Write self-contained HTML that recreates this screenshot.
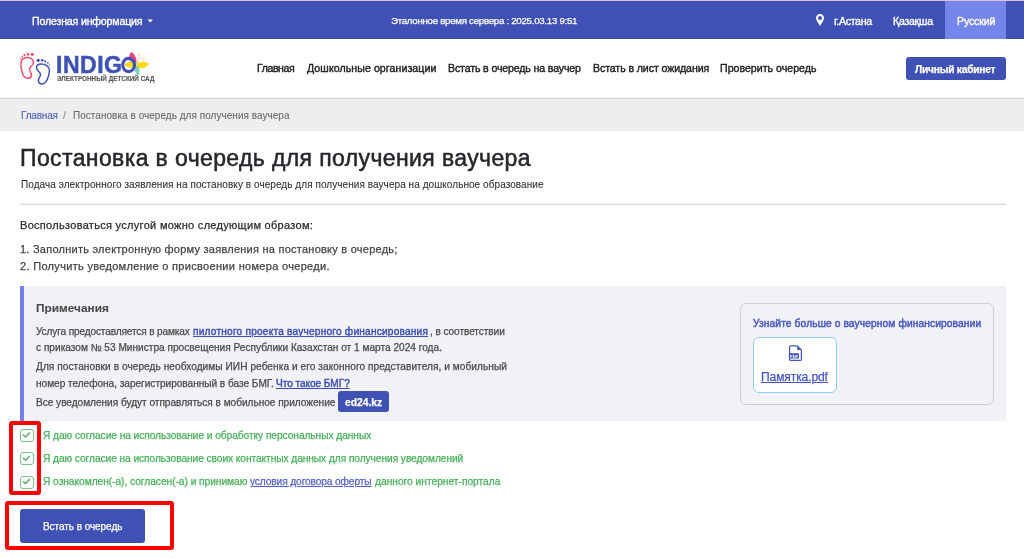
<!DOCTYPE html>
<html><head><meta charset="utf-8">
<style>
*{margin:0;padding:0;box-sizing:border-box}
html,body{width:1024px;height:558px;overflow:hidden;background:#fff;font-family:"Liberation Sans",sans-serif;color:#333}
.a{position:absolute}
.t{position:absolute;white-space:nowrap;line-height:1;-webkit-text-stroke:0.25px currentColor;will-change:transform}
a{color:#3f51b5}
#topstrip{left:0;top:0;width:1024px;height:1px;background:#d8c5cf}
#topbar{left:0;top:1px;width:1024px;height:38px;background:#3f51b5}
#ru{left:945.2px;top:1px;width:60.6px;height:38px;background:#7486e9}
#hdrline{left:0;top:97px;width:1024px;height:2px;background:#d3d3d3;border-top:1px solid #f6f6f6}
#bc{left:0;top:99px;width:1024px;height:32px;background:#eeeeee}
#hr{left:20px;top:203px;width:986px;height:2px;background:#dcdcdc;border-top:1px solid #f0f0f0}
#notes{left:20px;top:286px;width:986px;height:135px;background:#f1f2f6;border-left:4px solid #7282ea}
#card{left:740px;top:303px;width:254px;height:102px;border:1px solid #cfcfd4;border-radius:6px}
#file{left:753px;top:337px;width:84px;height:56px;border:1px solid #8fd0f2;border-radius:6px;background:#fff}
.cb{position:absolute;left:20px;width:14px;height:13px;border:1px solid #7fbf8a;border-radius:3px;background:#fff}
.red{position:absolute;border:4px solid #ff0000;border-radius:3px}
#btn{left:20px;top:509px;width:125px;height:34px;background:#3f51b5;border-radius:3px}
#lk{left:906px;top:57px;width:100px;height:23px;background:#3f51b5;border-radius:3px}
#badge{left:337.5px;top:391px;width:51.5px;height:21px;background:#3f51b5;border-radius:3px}
</style></head><body>
<div class="a" id="topstrip"></div>
<div class="a" id="topbar"></div>
<div class="a" id="ru"></div>
<div class="t" style="left:31.7px;top:16px;font-size:10.6px;letter-spacing:-0.167px;color:#fff;-webkit-text-stroke:0.35px currentColor">Полезная информация</div>
<svg class="a" style="left:147px;top:19px" width="7" height="4" viewBox="0 0 7 4"><path d="M0.5 0.5 L6 0.5 L3.25 3.5Z" fill="#fff"/></svg>
<div class="t" style="left:390.7px;top:16px;font-size:9.7px;letter-spacing:-0.275px;color:#fff">Эталонное время сервера : 2025.03.13 9:51</div>
<svg class="a" style="left:815px;top:13px" width="10" height="14" viewBox="0 0 10 14"><path d="M5 1 C2.6 1 1 2.8 1 5 C1 7.5 3.6 10.5 5 13 C6.4 10.5 9 7.5 9 5 C9 2.8 7.4 1 5 1Z M5 3 A2 2 0 1 1 5 7 A2 2 0 1 1 5 3Z" fill="#fff" fill-rule="evenodd"/></svg>
<div class="t" style="left:833.8px;top:16px;font-size:10.6px;letter-spacing:-0.3px;color:#fff;-webkit-text-stroke:0.35px currentColor">г.Астана</div>
<div class="t" style="left:892.8px;top:16px;font-size:10.6px;letter-spacing:-0.283px;color:#fff;-webkit-text-stroke:0.35px currentColor">Қазақша</div>
<div class="t" style="left:956.6px;top:16px;font-size:10.6px;letter-spacing:-0.15px;color:#fff;-webkit-text-stroke:0.35px currentColor">Русский</div>

<svg class="a" style="left:0;top:0" width="160" height="90" viewBox="0 0 160 90">
<g fill="#ee4d6e"><circle cx="32.2" cy="54.3" r="1.6"/><circle cx="28" cy="54.2" r="1.3"/><circle cx="24.5" cy="55.1" r="1.05"/><circle cx="22.2" cy="56.7" r="0.85"/><circle cx="20.8" cy="58.7" r="0.7"/></g>
<path d="M27 57.6 C31 57.6 33.8 59.6 33.4 63 C33 66 29.2 66.6 29.4 69.2 C29.6 71.4 31.8 72.6 31.4 75.6 C31 78 29 78.3 27.2 78.2 C23.2 78 21 71 20.9 64.3 C20.8 60 23.2 57.6 27 57.6 Z" fill="none" stroke="#ee4d6e" stroke-width="1.5"/>
<g fill="#3f51b5"><circle cx="38.2" cy="60.3" r="1.6"/><circle cx="42.2" cy="60.3" r="1.3"/><circle cx="45.3" cy="61.4" r="1.05"/><circle cx="47.9" cy="62.8" r="0.85"/><circle cx="49.5" cy="64.9" r="0.7"/></g>
<path d="M41.2 64 C37.8 64 36.2 65.6 36.5 68.2 C36.8 71 40.6 72.2 40.6 74.6 C40.6 76.6 38.2 78 38.4 80.6 C38.6 83 40.2 84 42 84 C46 84 49.4 77 49.4 70.2 C49.4 66.2 45.4 64 41.2 64 Z" fill="none" stroke="#3f51b5" stroke-width="1.5"/>
<path d="M131.3 52 C128 56 128.8 60 131 61.5 C133 63 135 63 136.4 62.6 C136.8 57.5 134.5 54 131.3 52 Z" fill="#f0407a"/>
<path d="M137 64.5 C133 60.5 127 61 124.6 65 C128 69 133 68.6 137 64.5 Z" fill="#ffd81a"/>
<path d="M136.4 64.6 C140 60.6 146 61 148.9 64 C146 68 141 70.2 136.4 66.4 Z" fill="#ffd81a"/>
<path d="M136 65.5 C133.4 68.5 134.4 73 138.5 75.3 C140.6 72 140.6 67.4 136 65.5 Z" fill="#7dd3bf"/>
<g fill="none" stroke="#f6cba6" stroke-width="0.8"><path d="M137.2 60.5 C137.5 58 139.5 57 139.6 55 C139.7 53.5 138 53 137.6 54.3 C137.3 55.3 138.6 55.6 138.8 54.8"/><path d="M137.8 61 C139.5 58.5 142 57.5 143.8 58.2 C145.3 58.8 145 60.8 143.6 60.6 C142.6 60.4 142.8 59.4 143.4 59.4"/></g>
<circle cx="137.2" cy="62.5" r="1" fill="#f39a58"/>
<ellipse cx="128.6" cy="65" rx="5.9" ry="6.6" fill="none" stroke="#3f51b5" stroke-width="3.1"/>
</svg>
<div class="t" style="left:55.9px;top:54px;font-size:23px;letter-spacing:0.525px;color:#3f51b5;font-weight:700;-webkit-text-stroke:0.5px #3f51b5">INDIG</div>
<div class="t" style="left:57.1px;top:76px;font-size:6.3px;letter-spacing:0.036px;color:#5a5a5a;font-weight:700;-webkit-text-stroke:0.15px #5a5a5a">ЭЛЕКТРОННЫЙ ДЕТСКИЙ САД</div>
<div class="t" style="left:257.0px;top:63px;font-size:10.6px;letter-spacing:-0.433px;color:#222;-webkit-text-stroke:0.4px currentColor">Главная</div>
<div class="t" style="left:306.6px;top:63px;font-size:10.6px;letter-spacing:0.071px;color:#222;-webkit-text-stroke:0.4px currentColor">Дошкольные организации</div>
<div class="t" style="left:447.8px;top:63px;font-size:10.6px;letter-spacing:-0.14px;color:#222;-webkit-text-stroke:0.4px currentColor">Встать в очередь на ваучер</div>
<div class="t" style="left:592.5px;top:63px;font-size:10.6px;letter-spacing:-0.095px;color:#222;-webkit-text-stroke:0.4px currentColor">Встать в лист ожидания</div>
<div class="t" style="left:719.6px;top:63px;font-size:10.6px;letter-spacing:0.013px;color:#222;-webkit-text-stroke:0.4px currentColor">Проверить очередь</div>
<div class="a" id="lk"></div>
<div class="t" style="left:914.9px;top:65px;font-size:10.2px;letter-spacing:-0.208px;color:#fff;font-weight:700">Личный кабинет</div>
<div class="a" id="hdrline"></div>

<div class="a" id="bc"></div>
<div class="t" style="left:20.5px;top:111px;font-size:10px;letter-spacing:-0.183px;color:#4a5bc0;-webkit-text-stroke:0.1px currentColor">Главная</div>
<div class="t" style="left:62.5px;top:111px;font-size:10px;letter-spacing:0px;color:#888;-webkit-text-stroke:0.1px currentColor">/</div>
<div class="t" style="left:73.1px;top:111px;font-size:10px;letter-spacing:0.034px;color:#6a6a6a;-webkit-text-stroke:0.1px currentColor">Постановка в очередь для получения ваучера</div>

<div class="t" style="left:20.4px;top:147px;font-size:23px;letter-spacing:0.385px;color:#25272b;-webkit-text-stroke:0.5px #25272b">Постановка в очередь для получения ваучера</div>
<div class="t" style="left:21.1px;top:180px;font-size:10px;letter-spacing:0.064px;color:#333;-webkit-text-stroke:0.1px currentColor">Подача электронного заявления на постановку в очередь для получения ваучера на дошкольное образование</div>
<div class="a" id="hr"></div>

<div class="t" style="left:20.3px;top:220px;font-size:11px;letter-spacing:0.298px;color:#2b2b2b">Воспользоваться услугой можно следующим образом:</div>
<div class="t" style="left:20.3px;top:244px;font-size:11px;letter-spacing:0.247px;color:#444">1. Заполнить электронную форму заявления на постановку в очередь;</div>
<div class="t" style="left:20.3px;top:261px;font-size:11px;letter-spacing:0.314px;color:#444">2. Получить уведомление о присвоении номера очереди.</div>

<div class="a" id="notes"></div>
<div class="t" style="left:35.5px;top:303px;font-size:11.8px;letter-spacing:0.022px;color:#4a4a4a;font-weight:700;-webkit-text-stroke:0.1px currentColor">Примечания</div>
<div class="t" style="left:35.5px;top:327px;font-size:10.1px;letter-spacing:-0.137px;color:#4a4a4a">Услуга предоставляется в рамках</div><div class="t" style="left:193.0px;top:327px;font-size:10.1px;letter-spacing:0.226px;color:#3f51b5;text-decoration:underline;-webkit-text-stroke:0.45px currentColor">пилотного проекта ваучерного финансирования</div><div class="t" style="left:429.5px;top:327px;font-size:10.1px;letter-spacing:-0.073px;color:#4a4a4a">, в соответствии</div>
<div class="t" style="left:35.5px;top:343px;font-size:10.1px;letter-spacing:0.012px;color:#4a4a4a">с приказом № 53 Министра просвещения Республики Казахстан от 1 марта 2024 года.</div>
<div class="t" style="left:35.5px;top:362px;font-size:10.1px;letter-spacing:0.066px;color:#4a4a4a">Для постановки в очередь необходимы ИИН ребенка и его законного представителя, и мобильный</div>
<div class="t" style="left:35.5px;top:379px;font-size:10.1px;letter-spacing:-0.027px;color:#4a4a4a">номер телефона, зарегистрированный в базе БМГ.</div><div class="t" style="left:276.3px;top:379px;font-size:10.1px;letter-spacing:-0.054px;color:#3f51b5;text-decoration:underline;-webkit-text-stroke:0.45px currentColor">Что такое БМГ?</div>
<div class="t" style="left:35.5px;top:398px;font-size:10.1px;letter-spacing:-0.023px;color:#4a4a4a">Все уведомления будут отправляться в мобильное приложение</div>
<div class="a" id="badge"></div>
<div class="t" style="left:344.8px;top:398px;font-size:10.3px;letter-spacing:-0.017px;color:#fff;font-weight:700">ed24.kz</div>

<div class="a" id="card"></div>
<div class="t" style="left:753.0px;top:319px;font-size:10.2px;letter-spacing:0.125px;color:#4a5ac0;-webkit-text-stroke:0.5px #4a5ac0">Узнайте больше о ваучерном финансировании</div>
<div class="a" id="file"></div>
<svg class="a" style="left:0;top:0;overflow:visible" width="1" height="1"><g transform="translate(0,0)">
<path d="M790.6 345.8 L797.2 345.8 L801.4 350 L801.4 359.4 Q801.4 360.4 800.4 360.4 L790.6 360.4 Q789.6 360.4 789.6 359.4 L789.6 346.8 Q789.6 345.8 790.6 345.8 Z" fill="none" stroke="#4656bd" stroke-width="1.25"/>
<path d="M797.2 346 L797.2 350 L801.2 350 Z" fill="#4656bd"/>
<rect x="788.8" y="353.2" width="10.2" height="5.2" rx="0.6" fill="#4656bd"/>
<text x="790" y="357.6" font-family="Liberation Sans" font-size="4" font-weight="700" fill="#fff">PDF</text>
</g></svg>
<div class="t" style="left:761.0px;top:371px;font-size:12px;letter-spacing:-0.08px;color:#4656bd;text-decoration:underline;text-underline-offset:1px">Памятка.pdf</div>

<div class="cb" style="top:428.5px"></div>
<div class="cb" style="top:452px"></div>
<div class="cb" style="top:475.5px"></div>
<svg class="a" style="left:0;top:0;overflow:visible" width="1" height="1"><g fill="none" stroke="#5aaf6a" stroke-width="1.5" stroke-linecap="round" stroke-linejoin="round"><path d="M23.4 435.1 L25.6 437.0 L29.5 432.9"/><path d="M23.4 458.4 L25.6 460.3 L29.5 456.2"/><path d="M23.4 481.7 L25.6 483.6 L29.5 479.5"/></g></svg>
<div class="t" style="left:43.2px;top:431px;font-size:10.2px;letter-spacing:-0.058px;color:#47b05a">Я даю согласие на использование и обработку персональных данных</div>
<div class="t" style="left:43.2px;top:454px;font-size:10.2px;letter-spacing:-0.066px;color:#47b05a">Я даю согласие на использование своих контактных данных для получения уведомлений</div>
<div class="t" style="left:43.2px;top:477px;font-size:10.2px;letter-spacing:-0.035px;color:#47b05a">Я ознакомлен(-а), согласен(-а) и принимаю</div><div class="t" style="left:249.9px;top:477px;font-size:10.2px;letter-spacing:-0.123px;color:#5563c6;text-decoration:underline">условия договора оферты</div><div class="t" style="left:375.3px;top:477px;font-size:10.2px;letter-spacing:0.009px;color:#47b05a">данного интернет-портала</div>
<div class="red" style="left:9px;top:421px;width:32px;height:74px"></div>

<div class="a" id="btn"></div>
<div class="t" style="left:42.8px;top:522px;font-size:10px;letter-spacing:-0.053px;color:#fff">Встать в очередь</div>
<div class="red" style="left:5px;top:501px;width:169px;height:49px"></div>
</body></html>
